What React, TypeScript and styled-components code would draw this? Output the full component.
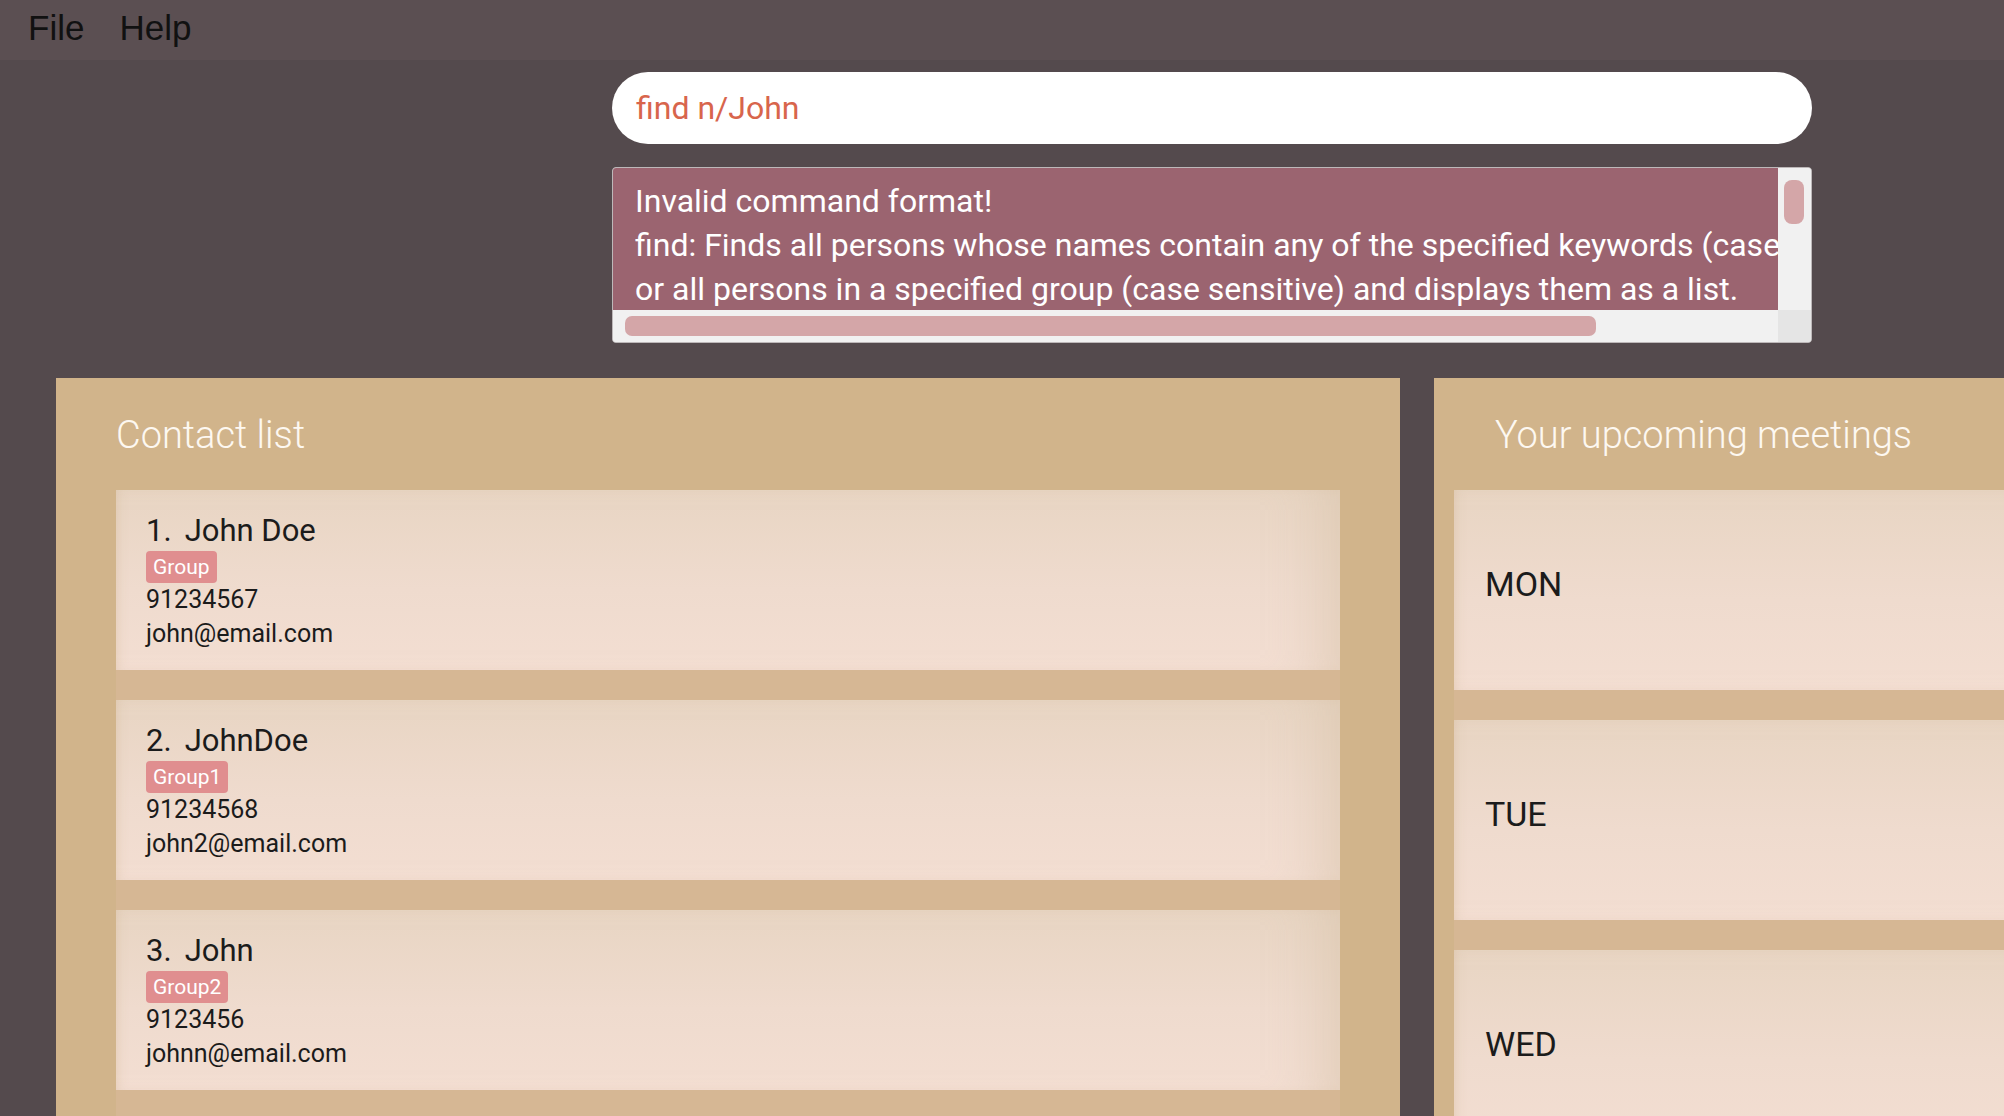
import React from "react";
import styled, { createGlobalStyle } from "styled-components";

const GlobalStyle = createGlobalStyle`
  html, body {
    margin: 0;
    padding: 0;
    height: 100%;
    overflow: hidden;
    background: #544a4d;
  }
  #root { height: 100%; }
  * { box-sizing: border-box; }
`;

const Page = styled.div`
  display: flex;
  flex-direction: column;
  height: 100vh;
  width: 100%;
  overflow: hidden;
  font-family: Roboto, "Liberation Sans", sans-serif;
`;

const MenuBar = styled.div`
  display: flex;
  align-items: center;
  gap: 35px;
  height: 60px;
  padding: 0 0 4px 28px;
  background: #5b4f52;
  flex-shrink: 0;
`;

const MenuItem = styled.span`
  font-family: "Liberation Sans", Arial, sans-serif;
  font-size: 35px;
  color: #111111;
`;

const CommandArea = styled.div`
  display: flex;
  flex-direction: column;
  gap: 23px;
  padding: 12px 0 0 612px;
  flex-shrink: 0;
`;

const CommandBox = styled.div`
  width: 1200px;
  height: 72px;
  border-radius: 36px;
  background: #ffffff;
  padding-left: 24px;
  display: flex;
  align-items: center;
  font-size: 32px;
  color: #d8654c;
`;

const ResultBox = styled.div`
  width: 1200px;
  height: 176px;
  border: 1px solid #bdb8b9;
  border-radius: 4px;
  background: #f0f0f0;
  display: grid;
  grid-template-columns: 1fr 33px;
  grid-template-rows: 1fr 32px;
  overflow: hidden;
`;

const ResultText = styled.div`
  background: #9b6470;
  color: #ffffff;
  font-size: 32px;
  line-height: 44px;
  padding: 11px 0 0 22px;
  white-space: pre;
  overflow: hidden;
`;

const VScroll = styled.div`
  background: #f1f1f1;
  padding: 12px 0 0 6px;
`;

const VThumb = styled.div`
  width: 20px;
  height: 44px;
  border-radius: 8px;
  background: #d4a6a8;
`;

const HScroll = styled.div`
  background: #f1f1f1;
  padding: 6px 0 0 12px;
`;

const HThumb = styled.div`
  width: 971px;
  height: 20px;
  border-radius: 7px;
  background: #d4a6a8;
`;

const Corner = styled.div`
  background: #e5e5e5;
`;

const Main = styled.div`
  display: flex;
  gap: 34px;
  padding: 35px 0 0 56px;
  flex: 1;
  min-height: 0;
`;

const Panel = styled.section<{ $width: number; $padLeft: number; $padRight: number; $titleIndent: number }>`
  width: ${(p) => p.$width}px;
  flex-shrink: 0;
  background: #d1b48b;
  padding: 29px ${(p) => p.$padRight}px 0 ${(p) => p.$padLeft}px;
  display: flex;
  flex-direction: column;
  h2 {
    margin: 0 0 27px ${(p) => p.$titleIndent}px;
    font-family: Roboto, sans-serif;
    font-weight: 300;
    font-size: 38px;
    line-height: 56px;
    color: #fdf8f1;
  }
`;

const List = styled.div`
  display: flex;
  flex-direction: column;
  background: #d6b794;
`;

const Cell = styled.div`
  padding-bottom: 30px;
`;

const Card = styled.div<{ $height: number }>`
  height: ${(p) => p.$height}px;
  background: linear-gradient(180deg, #e8d5c3 0%, #efdbce 55%, #f3ded2 100%);
  box-shadow: inset 8px 0 12px -8px rgba(205, 175, 140, 0.45),
    inset -60px 0 50px -40px rgba(215, 195, 170, 0.55);
`;

const ContactCard = styled(Card)`
  padding: 23px 0 0 30px;
  display: flex;
  flex-direction: column;
  align-items: flex-start;
  color: #1b1b1b;
`;

const NameRow = styled.div`
  display: flex;
  gap: 13px;
  font-size: 31px;
  line-height: 36px;
`;

const Tag = styled.span`
  margin-top: 2px;
  height: 32px;
  line-height: 32px;
  padding: 0 7px;
  border-radius: 4px;
  background: #e08e8f;
  color: #ffffff;
  font-size: 21px;
`;

const Detail = styled.div`
  font-size: 25px;
  line-height: 34px;
`;

const MeetingCard = styled(Card)`
  display: flex;
  align-items: center;
  padding: 0 0 12px 31px;
  font-size: 34px;
  color: #1b1b1b;
`;

const contacts = [
  { idx: 1, name: "John Doe", tag: "Group", phone: "91234567", email: "john@email.com" },
  { idx: 2, name: "JohnDoe", tag: "Group1", phone: "91234568", email: "john2@email.com" },
  { idx: 3, name: "John", tag: "Group2", phone: "9123456", email: "johnn@email.com" },
];

const days = ["MON", "TUE", "WED"];

const resultMessage =
  "Invalid command format!\n" +
  "find: Finds all persons whose names contain any of the specified keywords (case insensitive)\n" +
  "or all persons in a specified group (case sensitive) and displays them as a list.";

export default function App() {
  return (
    <>
      <GlobalStyle />
      <Page>
        <MenuBar>
          <MenuItem>File</MenuItem>
          <MenuItem>Help</MenuItem>
        </MenuBar>
        <CommandArea>
          <CommandBox>find n/John</CommandBox>
          <ResultBox>
            <ResultText>{resultMessage}</ResultText>
            <VScroll>
              <VThumb />
            </VScroll>
            <HScroll>
              <HThumb />
            </HScroll>
            <Corner />
          </ResultBox>
        </CommandArea>
        <Main>
          <Panel $width={1344} $padLeft={60} $padRight={60} $titleIndent={0}>
            <h2>Contact list</h2>
            <List>
              {contacts.map((c) => (
                <Cell key={c.idx}>
                  <ContactCard $height={180}>
                    <NameRow>
                      <span>{c.idx}.</span>
                      <span>{c.name}</span>
                    </NameRow>
                    <Tag>{c.tag}</Tag>
                    <Detail>{c.phone}</Detail>
                    <Detail>{c.email}</Detail>
                  </ContactCard>
                </Cell>
              ))}
            </List>
          </Panel>
          <Panel $width={900} $padLeft={20} $padRight={20} $titleIndent={41}>
            <h2>Your upcoming meetings</h2>
            <List>
              {days.map((d) => (
                <Cell key={d}>
                  <MeetingCard $height={200}>{d}</MeetingCard>
                </Cell>
              ))}
            </List>
          </Panel>
        </Main>
      </Page>
    </>
  );
}
